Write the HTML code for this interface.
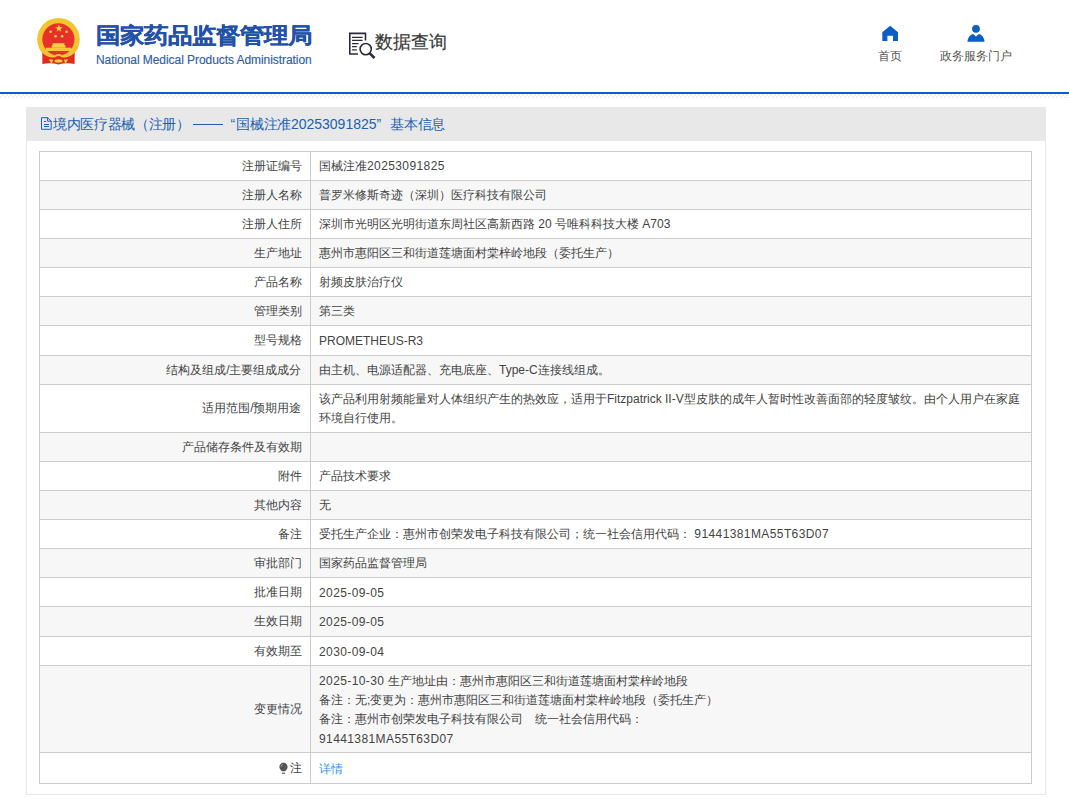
<!DOCTYPE html>
<html><head><meta charset="utf-8">
<style>
*{margin:0;padding:0;box-sizing:border-box}
html,body{width:1069px;height:800px;overflow:hidden;background:#fff;font-family:"Liberation Sans",sans-serif;color:#555}
.a{position:absolute}
.t{position:absolute;white-space:nowrap}
.n{letter-spacing:0.4px}
.lo{position:relative;top:1px}
.fw{display:inline-block;width:14px;text-align:center}
.pin{display:inline-block;width:11px;height:13px;vertical-align:-2px;margin-right:1px}
#panel{position:absolute;left:26px;top:107px;width:1020px;height:688px;border:1px solid #e8e8e8;border-top:none;background:#fff}
#phead{position:absolute;left:26px;top:107px;width:1020px;height:34px;background:#e8e8e8}
.row{position:absolute;left:39px;width:993px;border-left:1px solid #ccc;border-right:1px solid #ccc;border-bottom:1px solid #ccc}
.row.g{background:#f7f7f7}
.row .l{position:absolute;left:0;width:271px;top:0;bottom:0;border-right:1px solid #ccc;display:flex;align-items:center;justify-content:flex-end;padding-right:8.5px;font-size:12px;color:#444;white-space:nowrap}
.row .v{position:absolute;left:279px;right:8px;top:0;bottom:0;display:flex;align-items:center;font-size:12px;color:#444;line-height:18.6px}
</style></head><body>
<!-- header -->
<svg class="a" style="left:34px;top:15px" width="50" height="54" viewBox="34 15 50 54">
  <circle cx="58.5" cy="39.3" r="21.3" fill="#f4c430"/>
  <circle cx="58.4" cy="39.3" r="16.1" fill="#e8302a"/>
  <path d="M51.75 47.7 L51.75 45.5 L53 44.6 L52.2 43.3 L64.8 43.3 L64 44.6 L65.5 45.5 L65.5 47.7 Z" fill="#f6cf45"/>
  <rect x="45.9" y="47.7" width="25.5" height="3.3" fill="#f4c63a"/>
  <path d="M42.3 51.5 Q49 57.7 55 56.3 Q58.5 53.7 62 56.3 Q68 57.7 74.7 51.5 L74.6 64 Q66.5 62.3 58.5 64.4 Q50.5 62.3 42.4 64 Z" fill="#e42a1e"/>
  <path d="M42.3 51.5 Q49 57.7 55 56.3 Q58.5 53.7 62 56.3 Q68 57.7 74.7 51.5" fill="none" stroke="#f4c63a" stroke-width="1.8"/>
  <ellipse cx="58.5" cy="60.9" rx="4" ry="1.7" fill="#f4d040"/>
  <path d="M48.8 59.2 L53.2 59.8 L51.6 63.9 Z M68.2 59.2 L63.8 59.8 L65.4 63.9 Z" fill="#f4d040"/>
  <g fill="#f6d448">
  <path d="M58.9 24.6 L59.9 27.3 L62.7 27.3 L60.4 29 L61.3 31.7 L58.9 30 L56.5 31.7 L57.4 29 L55.1 27.3 L57.9 27.3 Z"/>
  <circle cx="50.6" cy="31.8" r="1.3"/><circle cx="66.6" cy="31.8" r="1.3"/>
  <circle cx="55.5" cy="36.2" r="1.3"/><circle cx="62.1" cy="36.2" r="1.3"/>
  </g>
</svg>
<div class="t" style="left:96px;top:21px;font-size:24px;font-weight:bold;color:#2351a8;-webkit-text-stroke:0.3px #2351a8;transform:scaleY(0.9);transform-origin:0 0">国家药品监督管理局</div>
<div class="t" style="left:96px;top:53px;font-size:12px;color:#2e5eac;letter-spacing:-0.06px;-webkit-text-stroke:0.15px #2e5eac">National Medical Products Administration</div>

<svg class="a" style="left:344px;top:28px" width="40" height="34" viewBox="344 28 40 34">
  <g fill="none" stroke="#2b2b3c" stroke-width="1.6" stroke-linecap="butt">
    <path d="M365.5 40.5 V33.4 H349.8 V54 H358"/>
    <path d="M352 37.4 H362.6 M352 40.4 H362.6 M352 43.6 H358.5 M352 46.6 H356.8 M352 49.8 H356.8" stroke-width="1.3"/>
    <circle cx="365.7" cy="49.1" r="5.6"/>
    <path d="M369.8 53.3 L374.5 58" stroke-width="2.6"/>
  </g>
</svg>
<div class="t" style="left:375px;top:30px;font-size:18px;color:#3a3a3a;-webkit-text-stroke:0.2px #3a3a3a">数据查询</div>

<svg class="a" style="left:880px;top:24px" width="20" height="20" viewBox="0 0 20 20">
  <path d="M10.15 1.8 L18 8.2 V17.1 H13 V11.7 H7.4 V17.1 H2.3 V8.2 Z" fill="#0b5fc4"/>
</svg>
<svg class="a" style="left:965px;top:23px" width="22" height="20" viewBox="0 0 22 20">
  <circle cx="11" cy="5.8" r="3.9" fill="#0b5fc4"/>
  <path d="M2.4 18.8 Q3.5 11.5 8.2 11 L11 13.6 L13.8 11 Q18.5 11.5 19.6 18.8 Z" fill="#0b5fc4"/>
</svg>
<div class="t" style="left:878px;top:48px;font-size:12px;color:#555">首页</div>
<div class="t" style="left:940px;top:48px;font-size:12px;color:#555">政务服务门户</div>

<div class="a" style="left:0;top:92px;width:1069px;height:1.5px;background:#0a60c6"></div>
<svg class="a" style="left:0;top:93.5px" width="1069" height="4"><defs><pattern id="hp" width="4" height="4" patternUnits="userSpaceOnUse"><path d="M-1 5 L5 -1" stroke="#e0e0e0" stroke-width="0.9"/></pattern></defs><rect width="1069" height="4" fill="url(#hp)"/></svg>

<!-- panel -->
<div id="panel"></div>
<div id="phead"></div>
<svg class="a" style="left:36px;top:112px" width="20" height="22" viewBox="36 112 20 22">
  <g fill="none" stroke="#1c5fc0" stroke-width="1">
  <path d="M41.5 117.7 H47.8 L51.2 121.1 V129.3 H41.5 Z"/>
  <path d="M47.6 117.7 V121.2 H51.2"/>
  <path d="M44 121.5 H46.2 M44 124.5 H49 M44 126.5 H49"/>
  </g>
</svg>
<div class="t" style="left:53px;top:116px;font-size:14px;color:#1a5fb4;letter-spacing:-0.35px">境内医疗器械（注册）</div>
<div class="a" style="left:193.2px;top:123.8px;width:29.8px;height:1.3px;background:#1a5fb4"></div>
<div class="t" id="lq" style="left:230.5px;top:116px;font-size:14px;color:#1a5fb4">“</div>
<div class="t" style="left:236.3px;top:116px;font-size:14px;color:#1a5fb4;letter-spacing:-0.35px">国械注准<span style="letter-spacing:0">20253091825</span><span style="display:inline-block;width:13.65px;letter-spacing:0">”</span>基本信息</div>

<div id="rows">
<div class="a" style="left:39px;top:151px;width:993px;height:1px;background:#ccc"></div>
<div class="row" style="top:152px;height:29px"><div class="l">注册证编号</div><div class="v"><div>国械注准<span class="n">20253091825</span></div></div></div>
<div class="row g" style="top:181px;height:29px"><div class="l">注册人名称</div><div class="v"><div>普罗米修斯奇迹（深圳）医疗科技有限公司</div></div></div>
<div class="row" style="top:210px;height:29px"><div class="l">注册人住所</div><div class="v"><div>深圳市光明区光明街道东周社区高新西路 20 号唯科科技大楼 A703</div></div></div>
<div class="row g" style="top:239px;height:29px"><div class="l">生产地址</div><div class="v"><div>惠州市惠阳区三和街道莲塘面村棠梓岭地段（委托生产）</div></div></div>
<div class="row" style="top:268px;height:29px"><div class="l">产品名称</div><div class="v"><div>射频皮肤治疗仪</div></div></div>
<div class="row g" style="top:297px;height:29px"><div class="l">管理类别</div><div class="v"><div>第三类</div></div></div>
<div class="row" style="top:326px;height:30px"><div class="l">型号规格</div><div class="v"><div><span class="lo">PROMETHEUS-R3</span></div></div></div>
<div class="row g" style="top:356px;height:29px"><div class="l">结构及组成/主要组成成分</div><div class="v"><div>由主机、电源适配器、充电底座、Type-C连接线组成。</div></div></div>
<div class="row" style="top:385px;height:48px"><div class="l">适用范围/预期用途</div><div class="v"><div>该产品利用射频能量对人体组织产生的热效应，适用于Fitzpatrick II-V型皮肤的成年人暂时性改善面部的轻度皱纹。由个人用户在家庭环境自行使用。</div></div></div>
<div class="row g" style="top:433px;height:29px"><div class="l">产品储存条件及有效期</div><div class="v"><div></div></div></div>
<div class="row" style="top:462px;height:29px"><div class="l">附件</div><div class="v"><div>产品技术要求</div></div></div>
<div class="row g" style="top:491px;height:29px"><div class="l">其他内容</div><div class="v"><div>无</div></div></div>
<div class="row" style="top:520px;height:29px"><div class="l">备注</div><div class="v"><div>受托生产企业：惠州市创荣发电子科技有限公司；统一社会信用代码： <span class="n">91441381MA55T63D07</span></div></div></div>
<div class="row g" style="top:549px;height:29px"><div class="l">审批部门</div><div class="v"><div>国家药品监督管理局</div></div></div>
<div class="row" style="top:578px;height:29px"><div class="l">批准日期</div><div class="v"><div><span class="n lo">2025-09-05</span></div></div></div>
<div class="row g" style="top:607px;height:30px"><div class="l">生效日期</div><div class="v"><div><span class="n lo">2025-09-05</span></div></div></div>
<div class="row" style="top:637px;height:29px"><div class="l">有效期至</div><div class="v"><div><span class="n lo">2030-09-04</span></div></div></div>
<div class="row g" style="top:666px;height:87px"><div class="l">变更情况</div><div class="v"><div class="t" style="left:0;top:5.5px;line-height:18px"><span class="n">2025-10-30</span> 生产地址由：惠州市惠阳区三和街道莲塘面村棠梓岭地段</div><div class="t" style="left:0;top:24.9px;line-height:18px">备注：无;变更为：惠州市惠阳区三和街道莲塘面村棠梓岭地段（委托生产）</div><div class="t" style="left:0;top:44.3px;line-height:18px">备注：惠州市创荣发电子科技有限公司　统一社会信用代码：</div><div class="t" style="left:0;top:63.7px;line-height:18px"><span class="n">91441381MA55T63D07</span></div></div></div>
<div class="row" style="top:753px;height:31px"><div class="l"><svg class="pin" viewBox="0 0 11 13"><path d="M5.5 0.8 C8 0.8 9.6 2.6 9.6 4.9 C9.6 6.6 8.3 7.6 7.3 9.3 L3.7 9.3 C2.7 7.6 1.4 6.6 1.4 4.9 C1.4 2.6 3 0.8 5.5 0.8 Z" fill="#555"/><path d="M4 11.2 H7" stroke="#555" stroke-width="1.1"/><path d="M3 4.5 Q3.3 2.8 4.8 2.2" stroke="#bbb" stroke-width="0.8" fill="none"/></svg>注</div><div class="v"><div><span style="color:#2e93f6;position:relative;top:1px">详情</span></div></div></div>
</div>
</body></html>
